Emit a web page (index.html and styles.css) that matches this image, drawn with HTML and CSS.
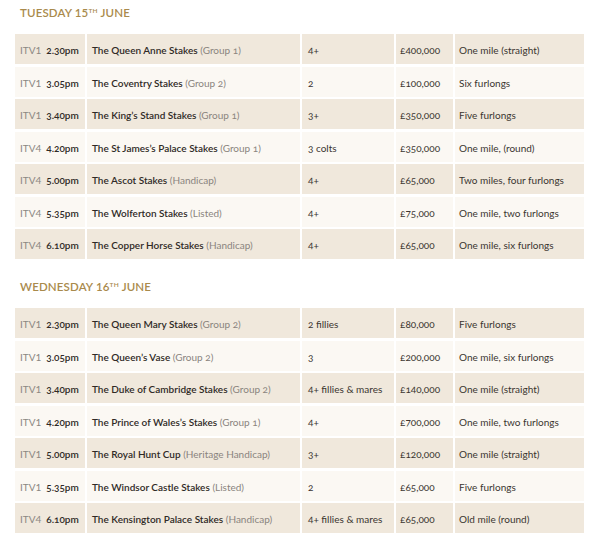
FILE: index.html
```html
<!DOCTYPE html>
<html>
<head>
<meta charset="utf-8">
<link rel="stylesheet" href="styles.css">
</head>
<body>
<div class="page">
  <section class="day">
    <h2 class="day-title">TUESDAY 15<sup>TH</sup> JUNE</h2>
    <div class="races">
      <div class="cell c1 dark"><span class="ch">ITV1</span><span class="time">2.30pm</span></div>
      <div class="cell c2 dark"><span class="name">The Queen Anne Stakes</span>&nbsp;<span class="grade">(Group 1)</span></div>
      <div class="cell c3 dark">4+</div>
      <div class="cell c4 dark">£400,000</div>
      <div class="cell c5 dark">One mile (straight)</div>

      <div class="cell c1 light"><span class="ch">ITV1</span><span class="time">3.05pm</span></div>
      <div class="cell c2 light"><span class="name">The Coventry Stakes</span>&nbsp;<span class="grade">(Group 2)</span></div>
      <div class="cell c3 light">2</div>
      <div class="cell c4 light">£100,000</div>
      <div class="cell c5 light">Six furlongs</div>

      <div class="cell c1 dark"><span class="ch">ITV1</span><span class="time">3.40pm</span></div>
      <div class="cell c2 dark"><span class="name">The King’s Stand Stakes</span>&nbsp;<span class="grade">(Group 1)</span></div>
      <div class="cell c3 dark">3+</div>
      <div class="cell c4 dark">£350,000</div>
      <div class="cell c5 dark">Five furlongs</div>

      <div class="cell c1 light"><span class="ch">ITV4</span><span class="time">4.20pm</span></div>
      <div class="cell c2 light"><span class="name">The St James’s Palace Stakes</span>&nbsp;<span class="grade">(Group 1)</span></div>
      <div class="cell c3 light">3 colts</div>
      <div class="cell c4 light">£350,000</div>
      <div class="cell c5 light">One mile, (round)</div>

      <div class="cell c1 dark"><span class="ch">ITV4</span><span class="time">5.00pm</span></div>
      <div class="cell c2 dark"><span class="name">The Ascot Stakes</span>&nbsp;<span class="grade">(Handicap)</span></div>
      <div class="cell c3 dark">4+</div>
      <div class="cell c4 dark">£65,000</div>
      <div class="cell c5 dark">Two miles, four furlongs</div>

      <div class="cell c1 light"><span class="ch">ITV4</span><span class="time">5.35pm</span></div>
      <div class="cell c2 light"><span class="name">The Wolferton Stakes</span>&nbsp;<span class="grade">(Listed)</span></div>
      <div class="cell c3 light">4+</div>
      <div class="cell c4 light">£75,000</div>
      <div class="cell c5 light">One mile, two furlongs</div>

      <div class="cell c1 dark"><span class="ch">ITV4</span><span class="time">6.10pm</span></div>
      <div class="cell c2 dark"><span class="name">The Copper Horse Stakes</span>&nbsp;<span class="grade">(Handicap)</span></div>
      <div class="cell c3 dark">4+</div>
      <div class="cell c4 dark">£65,000</div>
      <div class="cell c5 dark">One mile, six furlongs</div>
    </div>
  </section>

  <section class="day day-second">
    <h2 class="day-title">WEDNESDAY 16<sup>TH</sup> JUNE</h2>
    <div class="races">
      <div class="cell c1 dark"><span class="ch">ITV1</span><span class="time">2.30pm</span></div>
      <div class="cell c2 dark"><span class="name">The Queen Mary Stakes</span>&nbsp;<span class="grade">(Group 2)</span></div>
      <div class="cell c3 dark">2 fillies</div>
      <div class="cell c4 dark">£80,000</div>
      <div class="cell c5 dark">Five furlongs</div>

      <div class="cell c1 light"><span class="ch">ITV1</span><span class="time">3.05pm</span></div>
      <div class="cell c2 light"><span class="name">The Queen’s Vase</span>&nbsp;<span class="grade">(Group 2)</span></div>
      <div class="cell c3 light">3</div>
      <div class="cell c4 light">£200,000</div>
      <div class="cell c5 light">One mile, six furlongs</div>

      <div class="cell c1 dark"><span class="ch">ITV1</span><span class="time">3.40pm</span></div>
      <div class="cell c2 dark"><span class="name">The Duke of Cambridge Stakes</span>&nbsp;<span class="grade">(Group 2)</span></div>
      <div class="cell c3 dark">4+ fillies &amp; mares</div>
      <div class="cell c4 dark">£140,000</div>
      <div class="cell c5 dark">One mile (straight)</div>

      <div class="cell c1 light"><span class="ch">ITV1</span><span class="time">4.20pm</span></div>
      <div class="cell c2 light"><span class="name">The Prince of Wales’s Stakes</span>&nbsp;<span class="grade">(Group 1)</span></div>
      <div class="cell c3 light">4+</div>
      <div class="cell c4 light">£700,000</div>
      <div class="cell c5 light">One mile, two furlongs</div>

      <div class="cell c1 dark"><span class="ch">ITV1</span><span class="time">5.00pm</span></div>
      <div class="cell c2 dark"><span class="name">The Royal Hunt Cup</span>&nbsp;<span class="grade">(Heritage Handicap)</span></div>
      <div class="cell c3 dark">3+</div>
      <div class="cell c4 dark">£120,000</div>
      <div class="cell c5 dark">One mile (straight)</div>

      <div class="cell c1 light"><span class="ch">ITV1</span><span class="time">5.35pm</span></div>
      <div class="cell c2 light"><span class="name">The Windsor Castle Stakes</span>&nbsp;<span class="grade">(Listed)</span></div>
      <div class="cell c3 light">2</div>
      <div class="cell c4 light">£65,000</div>
      <div class="cell c5 light">Five furlongs</div>

      <div class="cell c1 dark"><span class="ch">ITV4</span><span class="time">6.10pm</span></div>
      <div class="cell c2 dark"><span class="name">The Kensington Palace Stakes</span>&nbsp;<span class="grade">(Handicap)</span></div>
      <div class="cell c3 dark">4+ fillies &amp; mares</div>
      <div class="cell c4 dark">£65,000</div>
      <div class="cell c5 dark">Old mile (round)</div>
    </div>
  </section>
</div>
</body>
</html>
```

FILE: styles.css
```css
html, body {
  margin: 0;
  padding: 0;
  background: #ffffff;
}

.page {
  width: 600px;
  padding: 6px 16px 0 15px;
  box-sizing: border-box;
  font-family: Lato, "Open Sans", sans-serif;
}

.day-title {
  margin: 0 0 12px 5px;
  font-size: 11.5px;
  line-height: 14px;
  font-weight: 600;
  letter-spacing: 0.15px;
  color: #a98a4c;
}

.day-title sup {
  font-size: 6.5px;
  vertical-align: 0;
  position: relative;
  top: -4px;
  letter-spacing: 0.3px;
}

.day-second {
  margin-top: 21px;
}

.races {
  display: grid;
  grid-template-columns: 70px 213px 92px 57px 129px;
  grid-auto-rows: 30px;
  column-gap: 2px;
  row-gap: 2.5px;
}

.cell {
  display: flex;
  align-items: center;
  padding: 2px 0 0 6px;
  box-sizing: border-box;
  font-size: 10px;
  color: #3a3530;
  white-space: nowrap;
  font-variant-numeric: oldstyle-nums;
}

.c1 {
  padding-left: 5px;
}

.c2 {
  padding-left: 5px;
}

.c4,
.c5 {
  padding-left: 4px;
}

.dark {
  background: #f0e8dc;
}

.light {
  background: #fbf8f3;
}

.ch {
  color: #8c8782;
  margin-right: 5px;
  font-variant-numeric: lining-nums;
}

.time {
  color: #2f2a26;
  font-weight: 600;
}

.name {
  color: #2f2a26;
  font-weight: 600;
}

.grade {
  color: #8a847e;
}
```
